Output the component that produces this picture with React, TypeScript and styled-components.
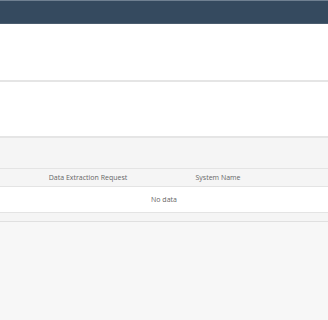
import React from 'react';
import styled, { createGlobalStyle } from 'styled-components';

const GlobalStyle = createGlobalStyle`
  html, body {
    margin: 0;
    padding: 0;
    background: #f7f7f7;
    font-family: "Open Sans", "Liberation Sans", sans-serif;
  }
`;

const Page = styled.div`
  width: 328px;
  height: 320px;
  display: flex;
  flex-direction: column;
  background: #f7f7f7;
  overflow: hidden;
`;

const ShellBar = styled.header`
  height: 22px;
  flex-shrink: 0;
  background: #354a5f;
  border-top: 1px solid #6f8091;
  border-bottom: 1px solid #4b5d6f;
`;

const Panel = styled.section<{ $height: number }>`
  height: ${(p) => p.$height}px;
  flex-shrink: 0;
  background: #ffffff;
  border-bottom: 2px solid #e5e5e5;
`;

const TableArea = styled.div`
  padding-top: 30px;
  display: flex;
  flex-direction: column;
  background: #f5f5f5;
`;

const Table = styled.div`
  display: flex;
  flex-direction: column;
`;

const HeaderRow = styled.div`
  display: grid;
  grid-template-columns: 23px 130px 130px 1fr;
  height: 17px;
  align-items: center;
  background: #f5f5f5;
  border-top: 1px solid #e4e4e4;
  border-bottom: 1px solid #e4e4e4;
`;

const HeaderCell = styled.div`
  font-size: 7px;
  color: #666666;
  text-align: center;
  white-space: nowrap;
`;

const EmptyRow = styled.div`
  height: 25px;
  display: flex;
  align-items: center;
  justify-content: center;
  background: #ffffff;
  font-size: 7px;
  color: #666666;
  border-bottom: 1px solid #e4e4e4;
`;

const Footer = styled.div`
  height: 8px;
  border-bottom: 1px solid #e0e0e0;
`;

export default function App() {
  return (
    <Page>
      <GlobalStyle />
      <ShellBar />
      <Panel $height={56} />
      <Panel $height={54} />
      <TableArea>
        <Table>
          <HeaderRow>
            <HeaderCell />
            <HeaderCell>Data Extraction Request</HeaderCell>
            <HeaderCell>System Name</HeaderCell>
            <HeaderCell />
          </HeaderRow>
          <EmptyRow>No data</EmptyRow>
        </Table>
        <Footer />
      </TableArea>
    </Page>
  );
}
